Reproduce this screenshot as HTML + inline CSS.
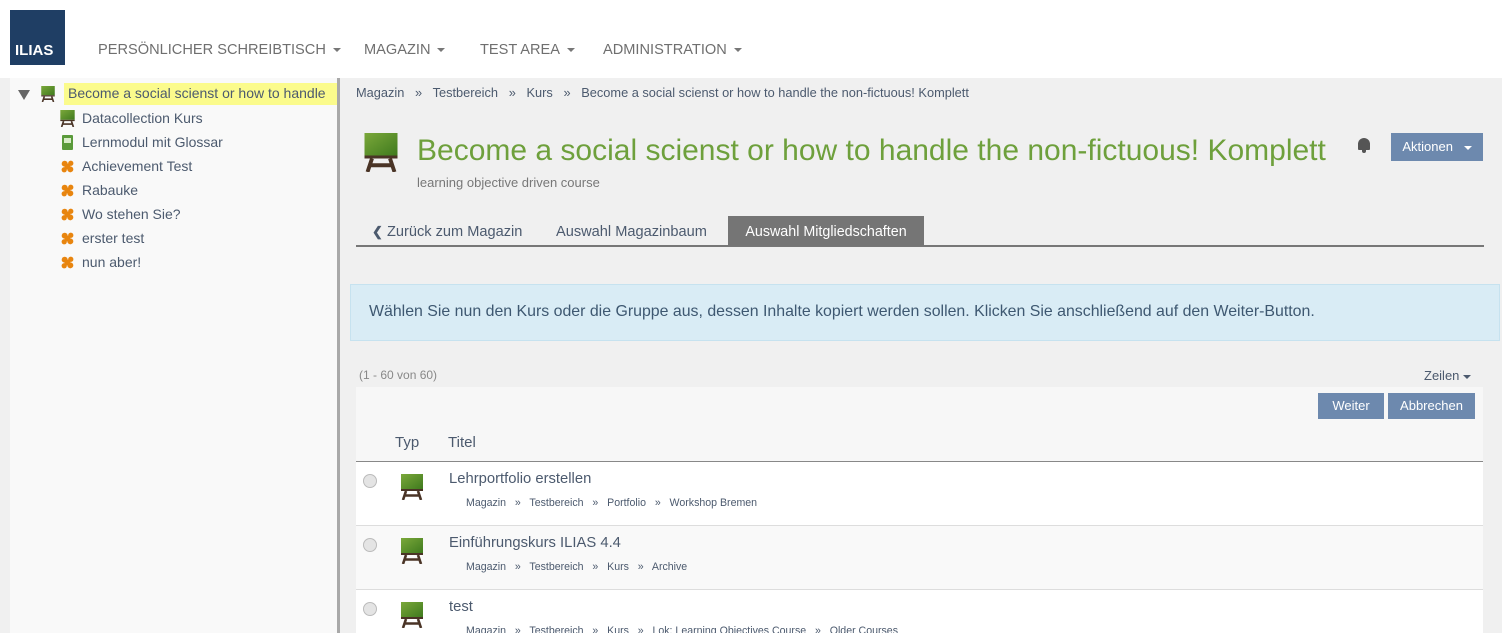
<!DOCTYPE html>
<html><head><meta charset="utf-8"><style>
*{box-sizing:border-box;margin:0;padding:0}
html,body{width:1502px;height:633px;overflow:hidden}
body{background:#f0f0f0;font-family:"Liberation Sans",sans-serif;color:#4c5a6e;position:relative}
.hdr{position:absolute;left:0;top:0;width:1502px;height:78px;background:#fff}
.logo{position:absolute;left:10px;top:10px;width:55px;height:55px;background:#1f3e64;color:#fff;font-weight:bold;font-size:15px;padding:32px 0 0 5px}
.nav{position:absolute;top:42px;font-size:14.6px;color:#6f6f6f}
.car{display:inline-block;border-left:4px solid transparent;border-right:4px solid transparent;border-top:4px solid #777;vertical-align:middle;margin-left:7px}
.left{position:absolute;left:10px;top:78px;width:330px;height:555px;background:#f9f9f9;border-right:3px solid #a9a9a9}
.ti{position:absolute;font-size:14px;color:#4c5a6e;white-space:nowrap}
.main{position:absolute;left:340px;top:78px;width:1162px;height:555px;overflow:hidden}
.abs{position:absolute;white-space:nowrap}
.bc{font-size:12.8px;color:#4c5a6e}
.btn{position:absolute;background:#6d89ae;color:#fff;font-size:13px;text-align:center}
.row{position:absolute;left:16px;width:1127px;height:64px;border-top:1px solid #ddd}
.rb{font-size:10.6px}
</style></head><body>
<svg width="0" height="0" style="position:absolute"><defs>
<symbol id="crs" viewBox="0 0 22 26"><defs><linearGradient id="g" x1="0" y1="0" x2="1" y2="1"><stop offset="0" stop-color="#7ba83a"/><stop offset="1" stop-color="#3f7a1e"/></linearGradient></defs><rect x="0" y="0" width="22" height="15" fill="url(#g)"/><rect x="0" y="15" width="22" height="2" fill="#4a3426"/><path d="M5 17 L2 26 M17 17 L20 26 M4 21.5 H18" stroke="#4a3426" stroke-width="2.6" fill="none"/></symbol>
<symbol id="tst" viewBox="0 0 16 16"><circle cx="5" cy="5" r="3.2" fill="#e8850f"/><circle cx="11" cy="11" r="3.2" fill="#e8850f"/><circle cx="4.5" cy="11.5" r="2.8" fill="#e8850f"/><circle cx="11.5" cy="4.5" r="2.8" fill="#e8850f"/><rect x="5" y="5" width="6" height="6" fill="#e8850f"/></symbol>
</defs></svg>
<div class="hdr">
<div class="logo">ILIAS</div>
<div class="nav" style="left:98px">PERSÖNLICHER SCHREIBTISCH<span class="car"></span></div>
<div class="nav" style="left:364px">MAGAZIN<span class="car"></span></div>
<div class="nav" style="left:480px">TEST AREA<span class="car"></span></div>
<div class="nav" style="left:603px">ADMINISTRATION<span class="car"></span></div>
</div>
<div class="left">
<div class="abs" style="left:8px;top:12px;width:0;height:0;border-left:6px solid transparent;border-right:6px solid transparent;border-top:10px solid #666"></div>
<svg class="abs" style="left:31px;top:8px" width="14" height="16"><use href="#crs"/></svg>
<div class="ti" style="left:54px;top:5px;background:#fbfb8c;padding:2px 4px;height:22px;width:273px;overflow:hidden">Become a social scienst or how to handle</div>
<svg class="abs" style="left:50px;top:32px" width="15" height="17"><use href="#crs"/></svg>
<div class="ti" style="left:72px;top:32px">Datacollection Kurs</div>
<div class="abs" style="left:52px;top:57px;width:11px;height:15px;background:#5a9a3a;border-radius:1px"><div style="margin:3px 2px;width:7px;height:5px;background:#d8ecc8"></div></div>
<div class="ti" style="left:72px;top:56px">Lernmodul mit Glossar</div>
<svg class="abs" style="left:50px;top:81px" width="15" height="15"><use href="#tst"/></svg><div class="ti" style="left:72px;top:80px">Achievement Test</div>
<svg class="abs" style="left:50px;top:105px" width="15" height="15"><use href="#tst"/></svg><div class="ti" style="left:72px;top:104px">Rabauke</div>
<svg class="abs" style="left:50px;top:129px" width="15" height="15"><use href="#tst"/></svg><div class="ti" style="left:72px;top:128px">Wo stehen Sie?</div>
<svg class="abs" style="left:50px;top:153px" width="15" height="15"><use href="#tst"/></svg><div class="ti" style="left:72px;top:152px">erster test</div>
<svg class="abs" style="left:50px;top:177px" width="15" height="15"><use href="#tst"/></svg><div class="ti" style="left:72px;top:176px">nun aber!</div>
</div>
<div class="main">
<div class="abs bc" style="left:16px;top:7px">Magazin &nbsp; » &nbsp; Testbereich &nbsp; » &nbsp; Kurs &nbsp; » &nbsp; Become a social scienst or how to handle the non-fictuous! Komplett</div>
<svg class="abs" style="left:24px;top:55px" width="34" height="39"><use href="#crs"/></svg>
<div class="abs" style="left:77px;top:56px;font-size:30px;color:#6ea03c">Become a social scienst or how to handle the non-fictuous! Komplett</div>
<div class="abs" style="left:77px;top:97px;font-size:13px;color:#777">learning objective driven course</div>
<div class="abs" style="left:1017px;top:60px;width:14px;height:16px"><div style="width:12px;height:12px;background:#555;border-radius:6px 6px 1px 1px;margin:0 1px"></div><div style="width:4px;height:3px;background:#555;margin:0 5px;border-radius:0 0 2px 2px"></div></div>
<div class="btn" style="left:1051px;top:55px;width:92px;height:28px;line-height:28px;font-size:13px">Aktionen <span class="car" style="border-top-color:#fff"></span></div>
<div class="abs" style="left:16px;top:167px;width:1128px;border-top:2px solid #777"></div>
<div class="abs" style="left:32px;top:146px;font-size:14.6px"><b style="font-size:13px">❮</b> Zurück zum Magazin</div>
<div class="abs" style="left:216px;top:146px;font-size:14.6px">Auswahl Magazinbaum</div>
<div class="abs" style="left:388px;top:138px;width:196px;height:30px;background:#757575;color:#fff;font-size:14.3px;line-height:32px;text-align:center">Auswahl Mitgliedschaften</div>
<div class="abs" style="left:10px;top:206px;width:1150px;height:57px;background:#d9ecf5;border:1px solid #c6e2ef;font-size:15.9px;color:#3e5871;padding:18px 18px">Wählen Sie nun den Kurs oder die Gruppe aus, dessen Inhalte kopiert werden sollen. Klicken Sie anschließend auf den Weiter-Button.</div>
<div class="abs" style="left:19px;top:290px;font-size:12px;color:#888">(1 - 60 von 60)</div>
<div class="abs" style="left:1084px;top:290px;font-size:13px">Zeilen<span class="car" style="border-top-color:#4c5a6e;margin-left:4px"></span></div>
<div class="abs" style="left:16px;top:309px;width:1127px;height:75px;background:#f7f7f7;border-bottom:1px solid #888"></div>
<div class="btn" style="left:978px;top:315px;width:66px;height:26px;line-height:26px">Weiter</div>
<div class="btn" style="left:1048px;top:315px;width:87px;height:26px;line-height:26px">Abbrechen</div>
<div class="abs" style="left:55px;top:356px;font-size:15px">Typ</div>
<div class="abs" style="left:108px;top:356px;font-size:15px">Titel</div>
<div class="row" style="top:384px;background:#fff;border-top:none"></div>
<div class="row" style="top:447px;background:#f9f9f9"></div>
<div class="row" style="top:511px;background:#fff"></div>
<div class="abs" style="left:23px;top:396px;width:14px;height:14px;border-radius:7px;background:#e4e4e4;border:1px solid #bbb"></div>
<svg class="abs" style="left:61px;top:396px" width="22" height="26"><use href="#crs"/></svg>
<div class="abs" style="left:109px;top:393px;font-size:14.8px">Lehrportfolio erstellen</div>
<div class="abs rb" style="left:126px;top:419px">Magazin &nbsp; » &nbsp; Testbereich &nbsp; » &nbsp; Portfolio &nbsp; » &nbsp; Workshop Bremen</div>
<div class="abs" style="left:23px;top:460px;width:14px;height:14px;border-radius:7px;background:#e4e4e4;border:1px solid #bbb"></div>
<svg class="abs" style="left:61px;top:460px" width="22" height="26"><use href="#crs"/></svg>
<div class="abs" style="left:109px;top:457px;font-size:14.8px">Einführungskurs ILIAS 4.4</div>
<div class="abs rb" style="left:126px;top:483px">Magazin &nbsp; » &nbsp; Testbereich &nbsp; » &nbsp; Kurs &nbsp; » &nbsp; Archive</div>
<div class="abs" style="left:23px;top:524px;width:14px;height:14px;border-radius:7px;background:#e4e4e4;border:1px solid #bbb"></div>
<svg class="abs" style="left:61px;top:524px" width="22" height="26"><use href="#crs"/></svg>
<div class="abs" style="left:109px;top:521px;font-size:14.8px">test</div>
<div class="abs rb" style="left:126px;top:547px">Magazin &nbsp; » &nbsp; Testbereich &nbsp; » &nbsp; Kurs &nbsp; » &nbsp; Lok: Learning Objectives Course &nbsp; » &nbsp; Older Courses</div>
</div>
</body></html>
